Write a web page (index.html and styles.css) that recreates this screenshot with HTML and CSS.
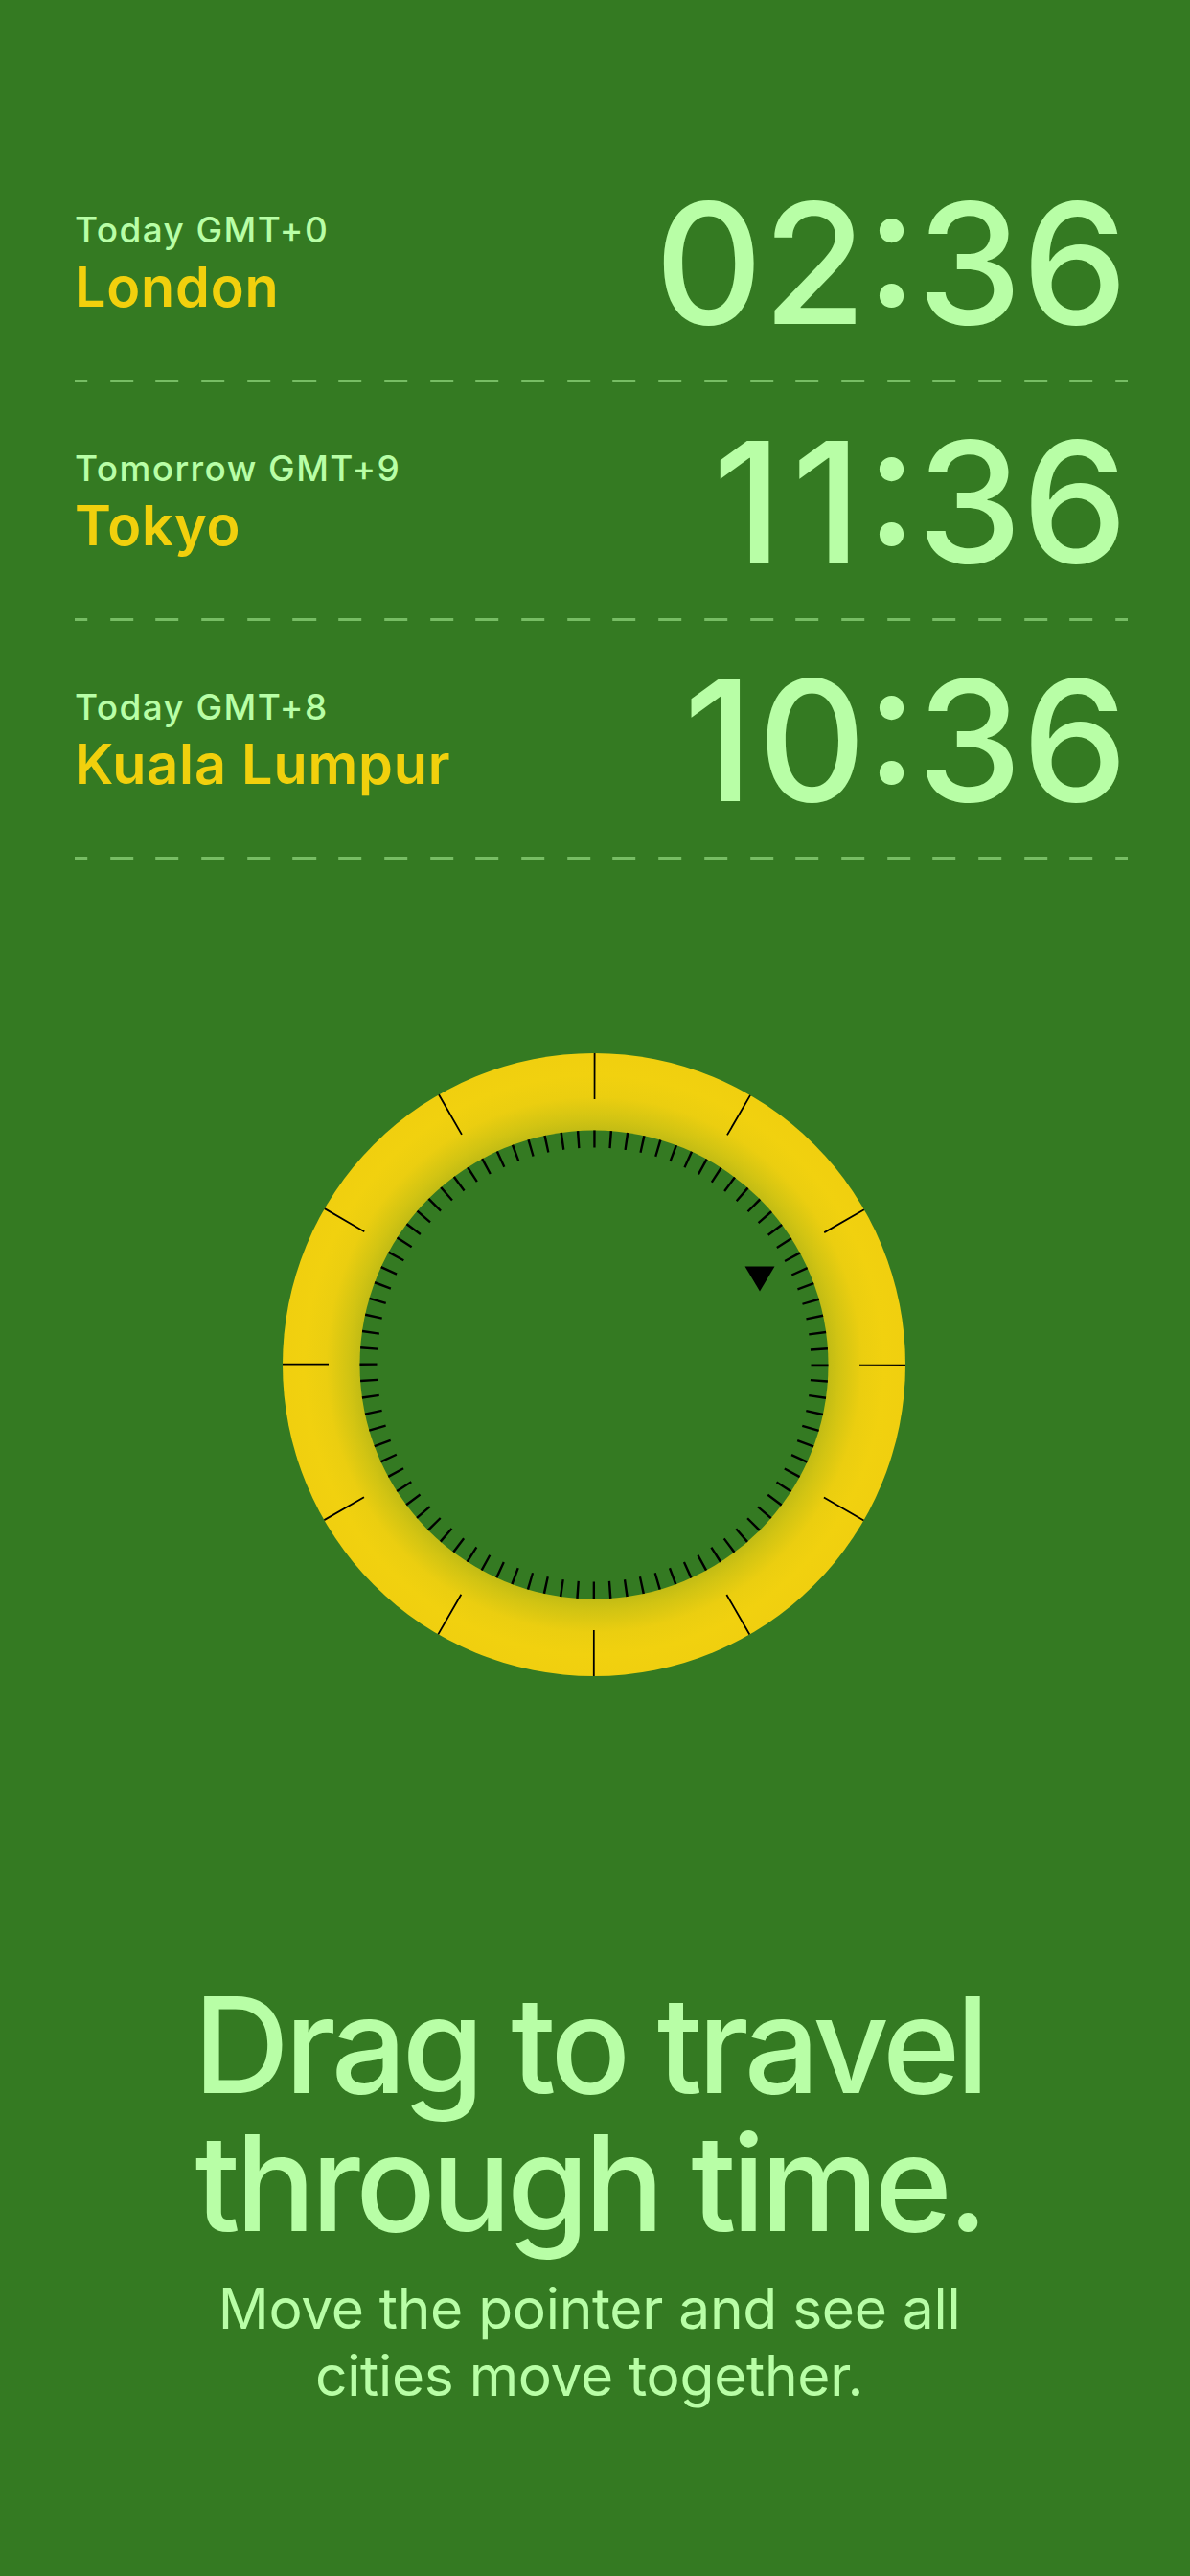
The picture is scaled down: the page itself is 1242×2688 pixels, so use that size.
FILE: index.html
```html
<!DOCTYPE html>
<html lang="en">
<head>
<meta charset="utf-8">
<title>World Clock</title>
<link rel="stylesheet" href="styles.css">
</head>
<body>
<main class="screen">
  <section class="clocks">
    <div class="row">
      <div class="place">
        <div class="zone">Today GMT+0</div>
        <div class="city">London</div>
      </div>
      <div class="time">02:36</div>
    </div>
    <div class="divider"></div>
    <div class="row">
      <div class="place">
        <div class="zone">Tomorrow GMT+9</div>
        <div class="city">Tokyo</div>
      </div>
      <div class="time"><span class="one">1</span><span class="one">1</span>:36</div>
    </div>
    <div class="divider"></div>
    <div class="row">
      <div class="place">
        <div class="zone">Today GMT+8</div>
        <div class="city">Kuala Lumpur</div>
      </div>
      <div class="time"><span class="one">1</span>0:36</div>
    </div>
    <div class="divider"></div>
  </section>

  <div class="dial-wrap">
    <svg class="dial" width="650" height="650" viewBox="0 0 650 650" xmlns="http://www.w3.org/2000/svg">
      <defs>
        <radialGradient id="ringShade" cx="325" cy="325" r="325" gradientUnits="userSpaceOnUse">
          <stop offset="0.74" stop-color="#bdb915"/>
          <stop offset="0.79" stop-color="#d2c413"/>
          <stop offset="0.86" stop-color="#ebce10"/>
          <stop offset="0.93" stop-color="#f1d10f"/>
          <stop offset="1" stop-color="#f0cf0f"/>
        </radialGradient>
      </defs>
      <circle cx="325" cy="325" r="325" fill="url(#ringShade)"/>
      <circle cx="325" cy="325" r="244.5" fill="#347a22"/>
      <!-- 12 major ticks on the ring -->
      <circle cx="325" cy="325" r="301" fill="none" stroke="#000" stroke-width="48"
              stroke-dasharray="1.8 155.803" stroke-dashoffset="0.9"/>
      <!-- 88 minor ticks inside -->
      <circle cx="325" cy="325" r="235.5" fill="none" stroke="#000" stroke-width="18"
              stroke-dasharray="2.4 14.4147" stroke-dashoffset="1.2"/>
      <!-- pointer -->
      <polygon points="482.5,222.5 513.5,222.5 498,248.5" fill="#000"/>
    </svg>
  </div>

  <section class="intro">
    <h1 class="headline">Drag to travel<br>through time.</h1>
    <p class="lede">Move the pointer and see all<br>cities move together.</p>
  </section>
</main>
</body>
</html>
```

FILE: styles.css
```css
* { box-sizing: border-box; }

html, body {
  margin: 0;
  padding: 0;
  background: #347a22;
}

body {
  font-family: Inter, "Noto Sans", "Liberation Sans", sans-serif;
  color: #b8fea6;
  width: 1242px;
  min-height: 2688px;
}

.screen {
  display: flex;
  flex-direction: column;
}

.clocks {
  padding: 152px 65px 0 78px;
  display: flex;
  flex-direction: column;
}

.row {
  height: 244px;
  display: flex;
  align-items: center;
  justify-content: space-between;
}

.place {
  display: flex;
  flex-direction: column;
  gap: 13px;
  margin-top: 2px;
}

.zone {
  font-size: 37px;
  font-weight: 500;
  line-height: 1;
  letter-spacing: 1.4px;
  color: #b8fea6;
}

.city {
  font-size: 57.5px;
  font-weight: 600;
  line-height: 1;
  letter-spacing: 0.8px;
  color: #f1d00d;
}

.time {
  font-size: 175px;
  font-weight: 500;
  line-height: 1;
  color: #b8fea6;
  letter-spacing: 0;
}

.time .one {
  margin: 0 5px;
}

.divider {
  height: 3px;
  margin-bottom: 2px;
  background-image: repeating-linear-gradient(to right, #77bd64 0 24px, transparent 24px 47.7px);
  background-position: -10.8px 0;
}

.dial-wrap {
  margin-top: 200px;
  display: flex;
  justify-content: center;
  padding-right: 3px;
}

.dial {
  display: block;
}

.intro {
  margin-top: 313px;
  padding-right: 12px;
  text-align: center;
}

.headline {
  margin: 0;
  font-size: 138.5px;
  font-weight: 500;
  line-height: 144px;
  letter-spacing: -4.6px;
  color: #b8fea6;
}

.lede {
  margin: 24px 0 0;
  font-size: 58.7px;
  font-weight: 400;
  line-height: 70px;
  letter-spacing: -0.3px;
  color: #b8fea6;
}
```
